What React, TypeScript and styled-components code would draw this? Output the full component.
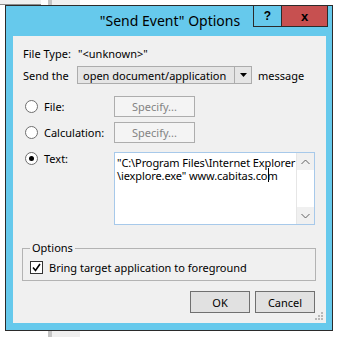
import React from 'react';
import styled, { createGlobalStyle } from 'styled-components';

const GlobalStyle = createGlobalStyle`
	html, body {
		margin: 0;
		padding: 0;
		background: #ffffff;
	}
	body {
		font-family: 'Noto Sans', 'Liberation Sans', sans-serif;
		font-size: 11px;
		color: #000;
	}
`;

const UI_FONT = `'Noto Sans', 'Liberation Sans', sans-serif`;

const Page = styled.div`
	width: 338px;
	height: 337px;
	overflow: hidden;
	display: flex;
	flex-direction: column;
`;

const Strip = styled.div<{ height: number }>`
	display: flex;
	height: ${p => p.height}px;
`;

const BehindPane = styled.div<{ width: number; edge?: 'top' | 'bottom' }>`
	width: ${p => p.width}px;
	background: #efefef;
	box-sizing: border-box;
	${p => (p.edge === 'top' ? 'border-bottom: 1px solid #8c8c8c;' : '')}
`;

const BehindGap = styled.div<{ width: number }>`
	width: ${p => p.width}px;
`;

const BehindBar = styled.div`
	width: 4px;
	background: #c4c4c4;
`;

const Window = styled.div`
	margin-left: 5px;
	width: 328px;
	box-sizing: border-box;
	border: 1px solid #2b2b2b;
	background: #66c9ec;
	padding: 0 6px 7px 7px;
	display: flex;
	flex-direction: column;
`;

const TitleBar = styled.div`
	height: 30px;
	display: grid;
	grid-template-areas: 'bar';
	margin: 0 -6px 0 -7px;
`;

const Title = styled.div`
	grid-area: bar;
	align-self: start;
	justify-self: center;
	padding: 6px 0 0 2px;
	font-family: ${UI_FONT};
	font-size: 14px;
	line-height: 18px;
`;

const CaptionButtons = styled.div`
	grid-area: bar;
	justify-self: end;
	align-self: start;
	display: flex;
	margin-top: -1px;
	margin-right: 4px;
`;

const CaptionButton = styled.div<{ width: number; close?: boolean }>`
	width: ${p => p.width}px;
	height: 22px;
	box-sizing: border-box;
	border: 1px solid #2b2b2b;
	margin-left: -1px;
	background: ${p => (p.close ? '#c75050' : 'transparent')};
	display: flex;
	align-items: center;
	justify-content: center;
	font-family: 'Liberation Sans', sans-serif;
	font-weight: bold;
	font-size: ${p => (p.close ? '13px' : '12px')};
	line-height: 1;
`;

const Client = styled.div`
	position: relative;
	height: 287px;
	background: #f0f0f0;
	padding: 0 10px;
	display: flex;
	flex-direction: column;
	font-family: ${UI_FONT};
	font-size: 11px;
`;

const Row = styled.div<{ top: number; height: number }>`
	margin-top: ${p => p.top}px;
	height: ${p => p.height}px;
	display: flex;
	align-items: center;
	white-space: nowrap;
`;

const Label = styled.span<{ width?: number }>`
	${p => (p.width ? `width: ${p.width}px;` : '')}
	flex-shrink: 0;
`;

const Combo = styled.div`
	width: 175px;
	height: 18px;
	box-sizing: border-box;
	border: 1px solid #acacac;
	background: #e5e5e5;
	display: flex;
	align-items: stretch;
	margin-right: 6px;
`;

const ComboText = styled.div`
	flex: 1;
	padding-left: 5px;
	display: flex;
	align-items: center;
`;

const ComboArrow = styled.div`
	width: 16px;
	border-left: 1px solid #acacac;
	display: flex;
	align-items: center;
	justify-content: center;
`;

const ChoiceGrid = styled.div`
	margin-top: 12px;
	display: grid;
	grid-template-columns: 91px 201px;
	grid-template-rows: 21px 21px 73px;
	row-gap: 5px;
`;

const Choice = styled.label<{ alignTop?: boolean }>`
	display: flex;
	align-items: ${p => (p.alignTop ? 'flex-start' : 'center')};
	gap: 6px;
	padding-left: 2px;
	white-space: nowrap;
`;

const Radio = styled.span<{ checked?: boolean }>`
	width: 13px;
	height: 13px;
	box-sizing: border-box;
	border-radius: 50%;
	border: 1px solid #6f6f6f;
	background: #fff;
	display: flex;
	align-items: center;
	justify-content: center;
	flex-shrink: 0;
	&::after {
		content: '';
		width: 5px;
		height: 5px;
		border-radius: 50%;
		background: ${p => (p.checked ? '#000' : 'transparent')};
	}
`;

const SpecifyButton = styled.div`
	width: 81px;
	height: 21px;
	box-sizing: border-box;
	border: 1px solid #adadad;
	background: #f4f4f4;
	color: #838383;
	display: flex;
	align-items: center;
	justify-content: center;
`;

const TextBox = styled.div`
	margin-top: 4px;
	height: 73px;
	box-sizing: border-box;
	border: 1px solid #a7c9ea;
	background: #fff;
	display: flex;
`;

const TextBody = styled.div`
	flex: 1;
	padding: 3px 0 0 2px;
	display: flex;
	flex-direction: column;
	align-items: flex-start;
`;

const TextLine = styled.div<{ caret?: boolean }>`
	position: relative;
	height: 13px;
	line-height: 13px;
	white-space: pre;
	letter-spacing: -0.1px;
	${p =>
		p.caret
			? `&::after {
		content: '';
		position: absolute;
		right: 9px;
		top: -1px;
		width: 1px;
		height: 14px;
		background: #000;
	}`
			: ''}
`;

const ScrollBar = styled.div`
	width: 17px;
	border-left: 1px solid #e6e6e6;
	background: #fff;
	display: flex;
	flex-direction: column;
	justify-content: space-between;
`;

const ScrollArrow = styled.div`
	height: 17px;
	display: flex;
	align-items: center;
	justify-content: center;
	background: #f0f0f0;
`;

const GroupBox = styled.fieldset`
	margin: 20px 0 0 -1px;
	width: 294px;
	height: 40px;
	box-sizing: border-box;
	border: 1px solid #b3b3b3;
	padding: 0 0 0 7px;
`;

const Legend = styled.legend`
	padding: 0 2px;
	font-size: 11px;
	line-height: 14px;
`;

const CheckRow = styled.label`
	display: flex;
	align-items: center;
	gap: 6px;
	margin-top: 5px;
`;

const CheckBox = styled.span`
	width: 13px;
	height: 13px;
	box-sizing: border-box;
	border: 1px solid #333;
	background: #fff;
	display: flex;
	align-items: center;
	justify-content: center;
`;

const ButtonRow = styled.div`
	margin-top: 10px;
	display: flex;
	justify-content: flex-end;
	gap: 5px;
	padding-right: 1px;
`;

const PushButton = styled.div`
	width: 60px;
	height: 22px;
	box-sizing: border-box;
	border: 1px solid #707070;
	background: #e1e1e1;
	display: flex;
	align-items: center;
	justify-content: center;
`;

const SizeGrip = styled.svg`
	position: absolute;
	right: 2px;
	bottom: 2px;
`;

const Arrow = ({ dir }: { dir: 'up' | 'down' }) => (
	<svg width="9" height="6" viewBox="0 0 9 6">
		<path
			d={dir === 'up' ? 'M0.5 5 L4.5 1 L8.5 5' : 'M0.5 1 L4.5 5 L8.5 1'}
			fill="none"
			stroke="#606060"
			strokeWidth="1"
		/>
	</svg>
);

const gripDots = [
	[8, 0],
	[8, 3],
	[5, 3],
	[8, 6],
	[5, 6],
	[2, 6],
];

export default function App() {
	return (
		<>
			<GlobalStyle />
			<Page>
				<Strip height={5}>
					<BehindPane width={41} edge="top" />
					<BehindGap width={7} />
					<BehindBar />
					<BehindPane width={28} />
				</Strip>
				<Window>
					<TitleBar>
						<Title>"Send Event" Options</Title>
						<CaptionButtons>
							<CaptionButton width={29}>?</CaptionButton>
							<CaptionButton width={47} close>
								x
							</CaptionButton>
						</CaptionButtons>
					</TitleBar>
					<Client>
						<Row top={10} height={14}>
							<Label width={55}>File Type:</Label>
							<span>"&lt;unknown&gt;"</span>
						</Row>
						<Row top={6} height={18}>
							<Label width={54}>Send the</Label>
							<Combo>
								<ComboText>open document/application</ComboText>
								<ComboArrow>
									<svg width="7" height="4" viewBox="0 0 7 4">
										<path d="M0 0 H7 L3.5 4 Z" fill="#000" />
									</svg>
								</ComboArrow>
							</Combo>
							<span>message</span>
						</Row>
						<ChoiceGrid>
							<Choice>
								<Radio />
								File:
							</Choice>
							<SpecifyButton>Specify...</SpecifyButton>
							<Choice>
								<Radio />
								Calculation:
							</Choice>
							<SpecifyButton>Specify...</SpecifyButton>
							<Choice alignTop>
								<Radio checked style={{ marginTop: 4 }} />
								<span style={{ marginTop: 3 }}>Text:</span>
							</Choice>
							<TextBox>
								<TextBody>
									<TextLine>{'"C:\\Program Files\\Internet Explorer'}</TextLine>
									<TextLine caret>{'\\iexplore.exe" www.cabitas.com'}</TextLine>
								</TextBody>
								<ScrollBar>
									<ScrollArrow>
										<Arrow dir="up" />
									</ScrollArrow>
									<ScrollArrow>
										<Arrow dir="down" />
									</ScrollArrow>
								</ScrollBar>
							</TextBox>
						</ChoiceGrid>
						<GroupBox>
							<Legend>Options</Legend>
							<CheckRow>
								<CheckBox>
									<svg width="9" height="9" viewBox="0 0 9 9">
										<path d="M1 4.5 L3.5 7.5 L8 1" fill="none" stroke="#000" strokeWidth="1.6" />
									</svg>
								</CheckBox>
								Bring target application to foreground
							</CheckRow>
						</GroupBox>
						<ButtonRow>
							<PushButton>OK</PushButton>
							<PushButton>Cancel</PushButton>
						</ButtonRow>
						<SizeGrip width="11" height="9" viewBox="0 0 11 9">
							{gripDots.map(([x, y]) => (
								<rect key={`${x}-${y}`} x={x} y={y} width="2" height="2" fill="#b8b8b8" />
							))}
						</SizeGrip>
					</Client>
				</Window>
				<Strip height={6}>
					<BehindGap width={48} />
					<BehindBar />
					<BehindPane width={28} />
				</Strip>
			</Page>
		</>
	);
}
